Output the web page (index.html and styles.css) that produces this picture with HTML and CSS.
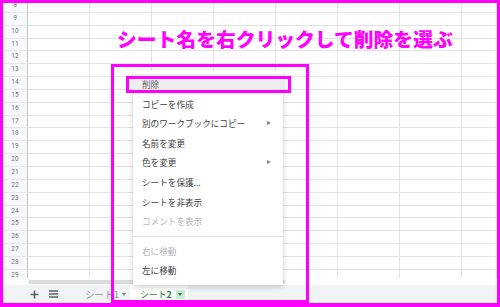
FILE: index.html
```html
<!DOCTYPE html>
<html lang="ja">
<head>
    <meta charset="UTF-8">
    <meta name="viewport" content="width=device-width, initial-scale=1.0">
    <title>シートの削除</title>
    <link rel="stylesheet" href="styles.css">
</head>
<body>
    <div class="frame">
        <div class="sheet">
            <div class="grid">
                <div class="rows">
                    <div class="row"><span class="num">8</span><span></span><span></span><span></span><span></span><span></span><span></span><span></span><span></span></div>
                    <div class="row"><span class="num">9</span><span></span><span></span><span></span><span></span><span></span><span></span><span></span><span></span></div>
                    <div class="row"><span class="num">10</span><span></span><span></span><span></span><span></span><span></span><span></span><span></span><span></span></div>
                    <div class="row"><span class="num">11</span><span></span><span></span><span></span><span></span><span></span><span></span><span></span><span></span></div>
                    <div class="row"><span class="num">12</span><span></span><span></span><span></span><span></span><span></span><span></span><span></span><span></span></div>
                    <div class="row"><span class="num">13</span><span></span><span></span><span></span><span></span><span></span><span></span><span></span><span></span></div>
                    <div class="row"><span class="num">14</span><span></span><span></span><span></span><span></span><span></span><span></span><span></span><span></span></div>
                    <div class="row"><span class="num">15</span><span></span><span></span><span></span><span></span><span></span><span></span><span></span><span></span></div>
                    <div class="row"><span class="num">16</span><span></span><span></span><span></span><span></span><span></span><span></span><span></span><span></span></div>
                    <div class="row"><span class="num">17</span><span></span><span></span><span></span><span></span><span></span><span></span><span></span><span></span></div>
                    <div class="row"><span class="num">18</span><span></span><span></span><span></span><span></span><span></span><span></span><span></span><span></span></div>
                    <div class="row"><span class="num">19</span><span></span><span></span><span></span><span></span><span></span><span></span><span></span><span></span></div>
                    <div class="row"><span class="num">20</span><span></span><span></span><span></span><span></span><span></span><span></span><span></span><span></span></div>
                    <div class="row"><span class="num">21</span><span></span><span></span><span></span><span></span><span></span><span></span><span></span><span></span></div>
                    <div class="row"><span class="num">22</span><span></span><span></span><span></span><span></span><span></span><span></span><span></span><span></span></div>
                    <div class="row"><span class="num">23</span><span></span><span></span><span></span><span></span><span></span><span></span><span></span><span></span></div>
                    <div class="row"><span class="num">24</span><span></span><span></span><span></span><span></span><span></span><span></span><span></span><span></span></div>
                    <div class="row"><span class="num">25</span><span></span><span></span><span></span><span></span><span></span><span></span><span></span><span></span></div>
                    <div class="row"><span class="num">26</span><span></span><span></span><span></span><span></span><span></span><span></span><span></span><span></span></div>
                    <div class="row"><span class="num">27</span><span></span><span></span><span></span><span></span><span></span><span></span><span></span><span></span></div>
                    <div class="row"><span class="num">28</span><span></span><span></span><span></span><span></span><span></span><span></span><span></span><span></span></div>
                    <div class="row"><span class="num">29</span><span></span><span></span><span></span><span></span><span></span><span></span><span></span><span></span></div>
                </div>
            </div>
            <div class="hscroll"><div class="thumb"></div></div>
            <div class="tabs">
                <span class="tool add">
                    <svg width="9" height="9" viewBox="0 0 9 9"><path d="M4.5 0.5v8M0.5 4.5h8" stroke="#5f6368" stroke-width="1.6"/></svg>
                </span>
                <span class="tool list">
                    <svg width="9" height="8" viewBox="0 0 9 8"><path d="M0 1h9M0 4h9M0 7h9" stroke="#5f6368" stroke-width="1.3"/></svg>
                </span>
                <div class="tab">シート1<span class="caret"></span></div>
                <div class="tab active">シート<b>2</b><span class="caret-box"><span class="caret"></span></span></div>
            </div>
        </div>

        <!-- 注釈 -->
        <h1 class="note">シート名を右クリックして削除を選ぶ</h1>

        <ul class="menu">
            <li class="item hover">削除</li>
            <li class="item">コピーを作成</li>
            <li class="item">別のワークブックにコピー<span class="sub"></span></li>
            <li class="item">名前を変更</li>
            <li class="item">色を変更<span class="sub"></span></li>
            <li class="item">シートを保護...</li>
            <li class="item">シートを非表示</li>
            <li class="item disabled">コメントを表示</li>
            <li class="sep"></li>
            <li class="item disabled">右に移動</li>
            <li class="item">左に移動</li>
        </ul>

        <div class="mark mark-area"></div>
        <div class="mark mark-item"></div>
    </div>
</body>
</html>
```

FILE: styles.css
```css
body {
    margin: 0;
    padding: 0;
    background: #ffffff;
    font-family: "Noto Sans CJK JP", "Noto Sans", sans-serif;
}
.frame {
    position: relative;
    width: 500px;
    height: 307px;
    box-sizing: border-box;
    border: 3px solid #ff00ff;
    border-bottom-width: 4px;
    overflow: hidden;
    background: #ffffff;
}
.sheet {
    display: flex;
    flex-direction: column;
    height: 100%;
}
.grid {
    height: 275px;
    overflow: hidden;
}
.rows {
    margin-top: -3px;
}
.row {
    display: grid;
    grid-template-columns: 25px repeat(7, 62px) 1fr;
    height: 12.85px;
}
.row span {
    box-sizing: border-box;
    border-right: 1px solid #e2e3e3;
    border-bottom: 1px solid #e2e3e3;
}
.row .num {
    background: #f8f9fa;
    border-right: 1px solid #c7c7c7;
    border-bottom: 1px solid #e6e7e8;
    color: #6d7175;
    font-family: Roboto, "Liberation Sans", sans-serif;
    font-size: 6.5px;
    line-height: 11px;
    text-align: center;
}
.hscroll {
    height: 7px;
    background: #ffffff;
}
.thumb {
    margin: 2px 0 0 25px;
    width: 257px;
    height: 4px;
    border-radius: 2px;
    background: #dadce0;
}
.tabs {
    flex: 1;
    display: flex;
    align-items: stretch;
    background: #f1f3f4;
    padding-left: 27px;
}
.tool {
    display: flex;
    align-items: center;
    justify-content: center;
    flex-shrink: 0;
}
.add {
    width: 9px;
}
.list {
    width: 9px;
    margin-left: 10px;
    margin-right: 15px;
}
.tab {
    display: flex;
    flex-shrink: 0;
    align-items: center;
    padding: 0 4px 0 12px;
    font-size: 9.6px;
    color: #8d9296;
    white-space: nowrap;
}
.tab .caret {
    margin-left: 3px;
    border-top: 3px solid #80868b;
    border-left: 2.5px solid transparent;
    border-right: 2.5px solid transparent;
}
.tab.active {
    background: #ffffff;
    color: #188038;
    font-size: 8.8px;
    padding: 0 3px 0 10px;
}
.tab.active b {
    font-weight: bold;
}
.caret-box {
    display: flex;
    align-items: center;
    justify-content: center;
    width: 9px;
    height: 9px;
    margin-left: 4px;
    background: #ceead6;
}
.caret-box .caret {
    margin: 0;
    border-top-color: #188038;
}
.note {
    position: absolute;
    left: 114px;
    top: 24px;
    margin: 0;
    font-size: 19.8px;
    line-height: 24px;
    font-weight: 900;
    color: #ff00ff;
    white-space: nowrap;
}
.menu {
    position: absolute;
    left: 130px;
    top: 67px;
    width: 150px;
    margin: 0;
    padding: 4.2px 0 5px;
    list-style: none;
    background: #ffffff;
    box-shadow: 0 2px 6px rgba(0,0,0,0.2);
}
.item {
    display: flex;
    align-items: center;
    justify-content: space-between;
    height: 19.6px;
    padding: 0 12px 0 9px;
    font-size: 8.6px;
    color: #3c4043;
}
.item.hover {
    background: #eeeeee;
    color: #5f6368;
}
.item.disabled {
    color: #b4b6b8;
}
.sub {
    border-left: 4px solid #80868b;
    border-top: 2.5px solid transparent;
    border-bottom: 2.5px solid transparent;
}
.sep {
    height: 1px;
    margin: 5px 0 4px;
    background: #e5e5e5;
}
.mark {
    position: absolute;
    box-sizing: border-box;
    border: 3px solid #ff00ff;
}
.mark-area {
    left: 108px;
    top: 61px;
    width: 198px;
    height: 239px;
}
.mark-item {
    left: 123px;
    top: 73px;
    width: 165px;
    height: 17px;
}
```
